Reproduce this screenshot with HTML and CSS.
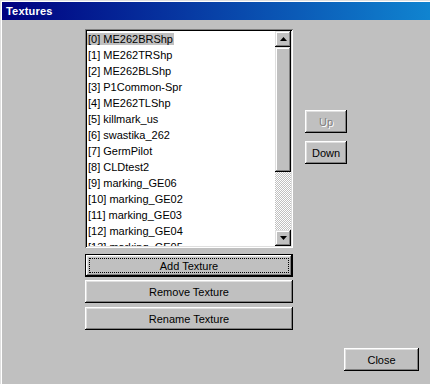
FILE: index.html
```html
<!DOCTYPE html>
<html>
<head>
<meta charset="utf-8">
<link rel="stylesheet" href="styles.css">
</head>
<body>
<div class="window">
  <div class="titlebar">Textures</div>
  <div class="main">
    <div class="left">
      <div class="listbox">
        <div class="items">
          <div class="item"><span class="sel">[0] ME262BRShp</span></div>
          <div class="item"><span>[1] ME262TRShp</span></div>
          <div class="item"><span>[2] ME262BLShp</span></div>
          <div class="item"><span>[3] P1Common-Spr</span></div>
          <div class="item"><span>[4] ME262TLShp</span></div>
          <div class="item"><span>[5] killmark_us</span></div>
          <div class="item"><span>[6] swastika_262</span></div>
          <div class="item"><span>[7] GermPilot</span></div>
          <div class="item"><span>[8] CLDtest2</span></div>
          <div class="item"><span>[9] marking_GE06</span></div>
          <div class="item"><span>[10] marking_GE02</span></div>
          <div class="item"><span>[11] marking_GE03</span></div>
          <div class="item"><span>[12] marking_GE04</span></div>
          <div class="item"><span>[13] marking_GE05</span></div>
        </div>
        <div class="scrollbar">
          <div class="sbtn"><svg width="7" height="4" viewBox="0 0 7 4"><polygon points="3.5,0 7,4 0,4" fill="#000"/></svg></div>
          <div class="thumb"></div>
          <div class="track"></div>
          <div class="sbtn"><svg width="7" height="4" viewBox="0 0 7 4"><polygon points="0,0 7,0 3.5,4" fill="#000"/></svg></div>
        </div>
      </div>
      <button class="btn wide default">Add Texture</button>
      <button class="btn wide gap3">Remove Texture</button>
      <button class="btn wide gap4">Rename Texture</button>
    </div>
    <div class="right">
      <button class="btn small disabled">Up</button>
      <button class="btn small">Down</button>
    </div>
  </div>
  <div class="footer">
    <button class="btn close">Close</button>
  </div>
</div>
</body>
</html>
```

FILE: styles.css
```css
html, body {
  margin: 0;
  padding: 0;
  background: #c0c0c0;
}
.window {
  width: 430px;
  height: 384px;
  box-sizing: border-box;
  background: #c0c0c0;
  box-shadow: inset 1px 1px #dfdfdf, inset 2px 2px #fff;
  padding: 2px 0 0 2px;
  display: flex;
  flex-direction: column;
  font-family: "Liberation Sans", Arial, sans-serif;
  font-size: 11px;
  color: #000;
}
.titlebar {
  height: 18px;
  line-height: 18px;
  padding-left: 4px;
  background: linear-gradient(to right, #000080, #1084d0);
  color: #fff;
  font-weight: bold;
  font-size: 11px;
  letter-spacing: 0.2px;
}
.main {
  display: flex;
  padding: 9px 0 0 83px;
}
.left {
  width: 208px;
  display: flex;
  flex-direction: column;
}
.listbox {
  height: 219px;
  box-sizing: border-box;
  padding: 2px;
  display: flex;
  box-shadow: inset 1px 1px #808080, inset -1px -1px #fff, inset 2px 2px #000, inset -2px -2px #dfdfdf;
}
.items {
  flex: 1;
  background: #fff;
  overflow: hidden;
}
.item {
  height: 16px;
  line-height: 16px;
  white-space: nowrap;
}
.item span {
  padding: 0 1px;
}
.item .sel {
  background: #c0c0c0;
}
.scrollbar {
  width: 16px;
  display: flex;
  flex-direction: column;
}
.sbtn, .thumb {
  background: #c0c0c0;
  box-shadow: inset -1px -1px #000, inset 1px 1px #dfdfdf, inset -2px -2px #808080, inset 2px 2px #fff;
}
.sbtn {
  height: 16px;
  display: flex;
  align-items: center;
  justify-content: center;
}
.thumb {
  height: 125px;
}
.track {
  flex: 1;
  background-image: conic-gradient(#fff 25%, #c0c0c0 0 50%, #fff 0 75%, #c0c0c0 0);
  background-size: 2px 2px;
}
.btn {
  position: relative;
  border: none;
  padding: 0;
  margin: 0;
  height: 23px;
  background: #c0c0c0;
  font-family: "Liberation Sans", Arial, sans-serif;
  font-size: 11px;
  color: #000;
  box-shadow: inset -1px -1px #000, inset 1px 1px #fff, inset -2px -2px #808080, inset 2px 2px #dfdfdf;
}
.wide {
  width: 208px;
}
.default {
  margin-top: 6px;
  box-shadow: inset 0 0 0 1px #000, inset -2px -2px #000, inset 2px 2px #fff, inset -3px -3px #808080, inset 3px 3px #dfdfdf;
}
.default::after {
  content: "";
  position: absolute;
  left: 4px;
  top: 4px;
  right: 4px;
  bottom: 4px;
  border: 1px dotted #000;
}
.gap3 {
  margin-top: 3px;
}
.gap4 {
  margin-top: 4px;
}
.right {
  margin-left: 12px;
  padding-top: 81px;
  display: flex;
  flex-direction: column;
  gap: 8px;
}
.small {
  width: 42px;
}
.disabled {
  color: #808080;
  text-shadow: 1px 1px #fff;
}
.footer {
  display: flex;
  justify-content: flex-end;
  padding-right: 11px;
  margin-top: 18px;
}
.close {
  width: 75px;
}
```
